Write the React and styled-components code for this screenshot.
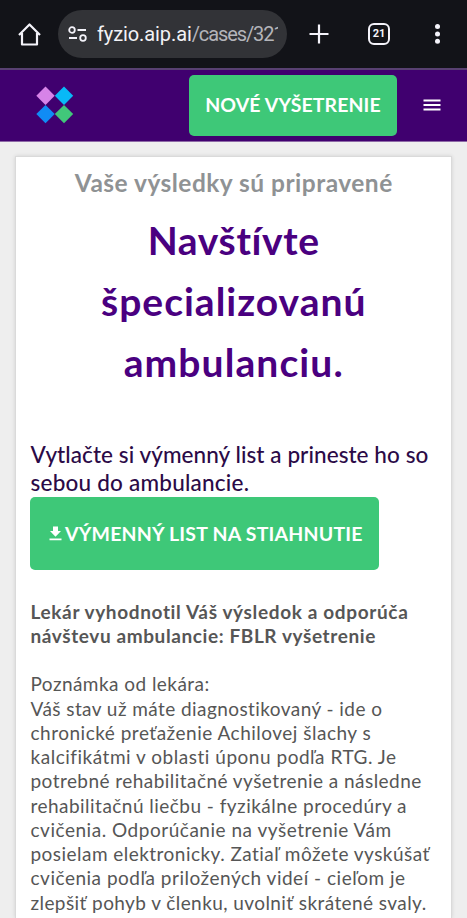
import React from "react";
import styled, { createGlobalStyle } from "styled-components";

const GlobalStyle = createGlobalStyle`
    * {
        box-sizing: border-box;
    }
    body {
        margin: 0;
        background: #eeeeee;
        font-family: Lato, "Liberation Sans", sans-serif;
    }
`
const Page = styled.div`
    width: 100%;
    height: 918px;
    overflow: hidden;
    display: flex;
    flex-direction: column;
`
const BrowserBar = styled.div`
    height: 68px;
    flex: none;
    display: flex;
    align-items: center;
    background: #121318;
    padding-left: 17px;
`
const AddressBar = styled.div`
    width: 229px;
    height: 48px;
    margin-left: 16px;
    padding-left: 9px;
    border-radius: 24px;
    background: #323337;
    display: flex;
    align-items: center;
`
const Url = styled.div`
    width: 181px;
    margin-left: 10px;
    overflow: hidden;
    white-space: nowrap;
    font-family: Roboto, sans-serif;
    font-size: 20px;
    line-height: 28px;
    letter-spacing: -0.1px;
    color: #f2f2f6;

    span {
        color: #b4b5ba;
        letter-spacing: -1.1px;
    }
`
const BrowserActions = styled.div`
    display: flex;
    align-items: center;
    margin-left: 21px;
`
const TabCount = styled.div`
    width: 22px;
    height: 22px;
    margin: 0 40px 0 38px;
    border: 2px solid #f4f3fa;
    border-radius: 6px;
    color: #f4f3fa;
    font-family: Roboto, sans-serif;
    font-size: 11px;
    font-weight: 700;
    line-height: 18px;
    text-align: center;
`
const Header = styled.header`
    height: 74px;
    flex: none;
    display: flex;
    align-items: center;
    background: #40006f;
    border-top: 2px solid #584071;
    border-bottom: 1px solid #8d69a6;
    padding: 0 26px 1px 36px;
`
const NewButton = styled.button`
    width: 208px;
    height: 61px;
    margin-left: auto;
    padding: 0 0 2px;
    border: 0;
    border-radius: 5px;
    background: #3ec878;
    color: #fff;
    font-family: inherit;
    font-size: 19.5px;
    font-weight: 700;
    letter-spacing: 0.1px;
`
const MenuButton = styled.button`
    display: flex;
    margin-left: 26px;
    padding: 0;
    border: 0;
    background: none;
`
const Card = styled.main`
    flex: 1;
    margin: 14px 15px 0;
    padding: 11px 14px 0;
    border: 1px solid #dadada;
    border-bottom: 0;
    background: #fff;
    box-shadow: 0 0 4px rgba(0, 0, 0, 0.12);
    white-space: nowrap;
`
const Line = styled.span`
    display: block;
    padding-left: 0.5px;
    letter-spacing: ${(props) => props.$spacing || 0}px;
`
const Status = styled.h3`
    margin: 0;
    text-align: center;
    color: #8f9294;
    font-size: 24.5px;
    font-weight: 700;
    line-height: 30px;
`
const Title = styled.h1`
    margin: 12px 0 0;
    text-align: center;
    color: #4a0080;
    font-size: 39px;
    font-weight: 700;
    line-height: 61px;
`
const Instruction = styled.h2`
    margin: 48px 0 0;
    color: #2b0a47;
    font-size: 22.5px;
    font-weight: 500;
    line-height: 28px;
`
const DownloadButton = styled.button`
    width: 349px;
    height: 73px;
    padding: 0 0 1px 19px;
    border: 0;
    border-radius: 5px;
    background: #3ec878;
    color: #fff;
    display: flex;
    align-items: center;
    font-family: inherit;
    font-size: 19.5px;
    font-weight: 700;
    letter-spacing: 0.2px;
    white-space: nowrap;

    svg {
        margin-right: 3px;
    }
`
const Verdict = styled.p`
    margin: 29.5px 0 0;
    color: #565656;
    font-size: 19px;
    font-weight: 700;
    line-height: 24.27px;
`
const Note = styled.p`
    margin: 24.3px 0 0;
    color: #565656;
    font-size: 19px;
    font-weight: 400;
    line-height: 24.27px;
`

const titleLines = [
    { text: "Navštívte", spacing: 0.65 },
    { text: "špecializovanú", spacing: 1 },
    { text: "ambulanciu.", spacing: 1.1 },
]
const instructionLines = [
    { text: "Vytlačte si výmenný list a prineste ho so", spacing: 0.07 },
    { text: "sebou do ambulancie.", spacing: 0.22 },
]
const verdictLines = [
    { text: "Lekár vyhodnotil Váš výsledok a odporúča", spacing: 0.64 },
    { text: "návštevu ambulancie: FBLR vyšetrenie", spacing: 0.6 },
]
const noteLines = [
    { text: "Poznámka od lekára:", spacing: 0.45 },
    { text: "Váš stav už máte diagnostikovaný - ide o", spacing: 0.43 },
    { text: "chronické preťaženie Achilovej šlachy s", spacing: 0.5 },
    { text: "kalcifikátmi v oblasti úponu podľa RTG. Je", spacing: 0.52 },
    { text: "potrebné rehabilitačné vyšetrenie a následne", spacing: 0.45 },
    { text: "rehabilitačnú liečbu - fyzikálne procedúry a", spacing: 0.47 },
    { text: "cvičenia. Odporúčanie na vyšetrenie Vám", spacing: 0.52 },
    { text: "posielam elektronicky. Zatiaľ môžete vyskúšať", spacing: 0.46 },
    { text: "cvičenia podľa priložených videí - cieľom je", spacing: 0.51 },
    { text: "zlepšiť pohyb v členku, uvolniť skrátené svaly.", spacing: 0.42 },
]

function Lines ({ items }) {
    return items.map((item) => (
        <Line key={item.text} $spacing={item.spacing}>{item.text}</Line>
    ))
}

function App () {
    return (
        <Page>
            <GlobalStyle />
            <BrowserBar>
                <svg width="25" height="26" viewBox="0 0 25 26" fill="none" stroke="#f4f3fa" strokeWidth="2.2" strokeLinejoin="round">
                    <path d="M2 14 L12.5 3.5 L23 14 M5 12 V23.5 H20 V12" />
                </svg>
                <AddressBar>
                    <svg width="20" height="18" viewBox="0 0 20 18" fill="none" stroke="#f4f3fa" strokeWidth="1.8">
                        <circle cx="5" cy="5" r="2.8" />
                        <path d="M10.5 5 H19 M2 13 H10" />
                        <circle cx="16" cy="13" r="2.8" />
                    </svg>
                    <Url>fyzio.aip.ai<span>/cases/321</span></Url>
                </AddressBar>
                <BrowserActions>
                    <svg width="22" height="22" viewBox="0 0 22 22" stroke="#f4f3fa" strokeWidth="2.2">
                        <path d="M1.5 11 H20.5 M11 1.5 V20.5" />
                    </svg>
                    <TabCount>21</TabCount>
                    <svg width="16" height="22" viewBox="0 0 16 22" fill="#f4f3fa">
                        <circle cx="7.5" cy="3.5" r="2.5" />
                        <circle cx="7.5" cy="11" r="2.5" />
                        <circle cx="7.5" cy="18.3" r="2.5" />
                    </svg>
                </BrowserActions>
            </BrowserBar>
            <Header>
                <svg width="38" height="38" viewBox="0 0 38 38">
                    <path fill="#d783e8" d="M9.5 0.5 L18.7 9.7 L9.5 18.9 L0.3 9.7z" />
                    <path fill="#08b9f7" d="M28 0.5 L37.2 9.7 L28 18.9 L18.8 9.7z" />
                    <path fill="#108cf5" d="M9.5 18.9 L18.7 28.1 L9.5 37.3 L0.3 28.1z" />
                    <path fill="#41c77a" d="M28 18.9 L37.2 28.1 L28 37.3 L18.8 28.1z" />
                </svg>
                <NewButton>NOVÉ VYŠETRENIE</NewButton>
                <MenuButton>
                    <svg width="18" height="12" viewBox="0 0 18 12" stroke="#fff" strokeWidth="1.8">
                        <path d="M0.5 1.5 H17.5 M0.5 6 H17.5 M0.5 10.5 H17.5" />
                    </svg>
                </MenuButton>
            </Header>
            <Card>
                <Status><Line $spacing={0.48}>Vaše výsledky sú pripravené</Line></Status>
                <Title><Lines items={titleLines} /></Title>
                <Instruction><Lines items={instructionLines} /></Instruction>
                <DownloadButton>
                    <svg width="13" height="15" viewBox="0 0 13 15" fill="#fff">
                        <path d="M4 0.5 H9 V5 H12 L6.5 10.7 L1 5 H4z M0.5 12.5 H12.5 V14.2 H0.5z" />
                    </svg>
                    VÝMENNÝ LIST NA STIAHNUTIE
                </DownloadButton>
                <Verdict><Lines items={verdictLines} /></Verdict>
                <Note><Lines items={noteLines} /></Note>
            </Card>
        </Page>
    )
}

export default App;
